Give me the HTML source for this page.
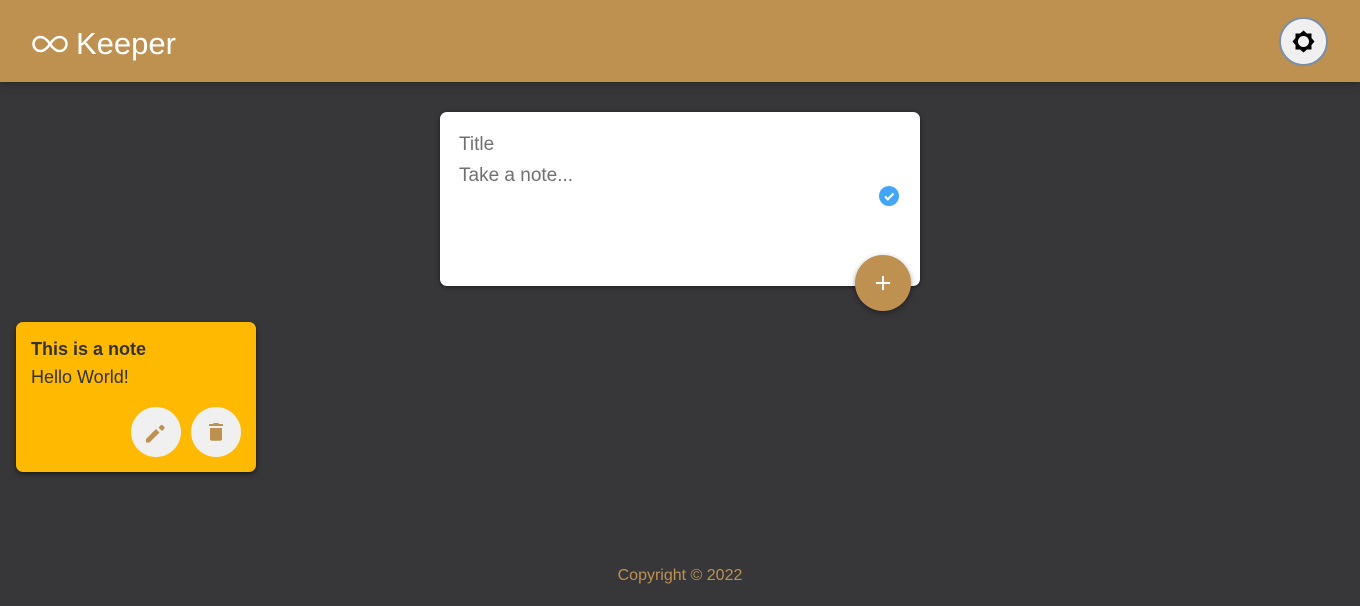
<!DOCTYPE html>
<html><head><meta charset="utf-8"><style>
*{margin:0;padding:0;box-sizing:border-box}
body{width:1360px;height:606px;background:#373739;font-family:"Liberation Sans",sans-serif;position:relative;overflow:hidden}
header{position:absolute;left:0;top:0;width:1360px;height:82px;background:#be9150;box-shadow:0 0 10px rgba(0,0,0,.4)}
.logo{position:absolute;left:32px;top:26px;color:#fff;font-size:31px;display:flex;align-items:center}
.logo svg{margin-right:8px}
.theme{position:absolute;left:1279px;top:17px;width:49px;height:49px;border-radius:50%;background:#f0f0f0;border:2px solid #7c8ea6}
.form{position:absolute;left:440px;top:112px;width:480px;height:174px;background:#fff;border-radius:7px;box-shadow:0 1px 5px rgba(0,0,0,.5)}
.form .t{position:absolute;left:19px;top:22px;font-size:19px;color:#707070}
.form .n{position:absolute;left:19px;top:53px;font-size:19px;color:#707070}
.check{position:absolute;left:439px;top:74px;width:20px;height:20px;border-radius:50%;background:#42a5f5}
.add{position:absolute;left:855px;top:255px;width:56px;height:56px;border-radius:50%;background:#be9150;box-shadow:0 2px 6px rgba(0,0,0,.4)}
.note{position:absolute;left:16px;top:322px;width:240px;height:150px;background:#ffb900;border-radius:7px;box-shadow:0 2px 5px rgba(0,0,0,.5)}
.note h1{position:absolute;left:15px;top:17px;font-size:18px;color:#333;font-weight:bold}
.note p{position:absolute;left:15px;top:45px;font-size:18px;color:#333}
.btn{position:absolute;top:85px;width:50px;height:50px;border-radius:50%;background:#f0f0f0}
footer{position:absolute;left:0;width:1360px;top:567px;text-align:center;color:#be9150;font-size:16px}
</style></head><body>
<header>
<div class="logo"><svg width="36" height="20" viewBox="0 0 36 20"><path d="M18 10C14 4 11 3 8.5 3A7 7 0 0 0 8.5 17C11 17 14 16 18 10C22 4 25 3 27.5 3A7 7 0 0 1 27.5 17C25 17 22 16 18 10Z" fill="none" stroke="#fff" stroke-width="2.5"/></svg>Keeper</div>
<div class="theme"><svg width="45" height="45" viewBox="0 0 45 45"><g transform="translate(22.5 22.5)"><polygon points="0,-11 3.5,-8 8,-8 8,-3.5 11,0 8,3.5 8,8 3.5,8 0,11 -3.5,8 -8,8 -8,3.5 -11,0 -8,-3.5 -8,-8 -3.5,-8" fill="#000"/><circle r="5.5" fill="#f0f0f0"/></g></svg></div>
</header>
<div class="form"><div class="t">Title</div><div class="n">Take a note...</div>
<div class="check"><svg width="20" height="20" viewBox="0 0 20 20"><path d="M6 10.5l2.8 2.8L14.5 7.5" fill="none" stroke="#fff" stroke-width="2.2"/></svg></div></div>
<div class="add"><svg width="56" height="56" viewBox="0 0 56 56"><path d="M28 21v14M21 28h14" stroke="#fff" stroke-width="2"/></svg></div>
<div class="note"><h1>This is a note</h1><p>Hello World!</p>
<div class="btn" style="left:115px"><svg width="50" height="50" viewBox="0 0 50 50"><path d="M15 32v3.5h3.5l10-10-3.5-3.5zM31 24l-3.5-3.5 2.3-2.3c.5-.5 1.3-.5 1.8 0l1.7 1.7c.5.5.5 1.3 0 1.8z" fill="#be9150"/></svg></div>
<div class="btn" style="left:175px"><svg width="50" height="50" viewBox="0 0 50 50"><path d="M19 21h12v11c0 1-.8 1.8-1.8 1.8h-8.4c-1 0-1.8-.8-1.8-1.8zM18 17h4l1-1h4l1 1h4v2H18z" fill="#be9150"/></svg></div>
</div>
<footer>Copyright © 2022</footer>
</body></html>
